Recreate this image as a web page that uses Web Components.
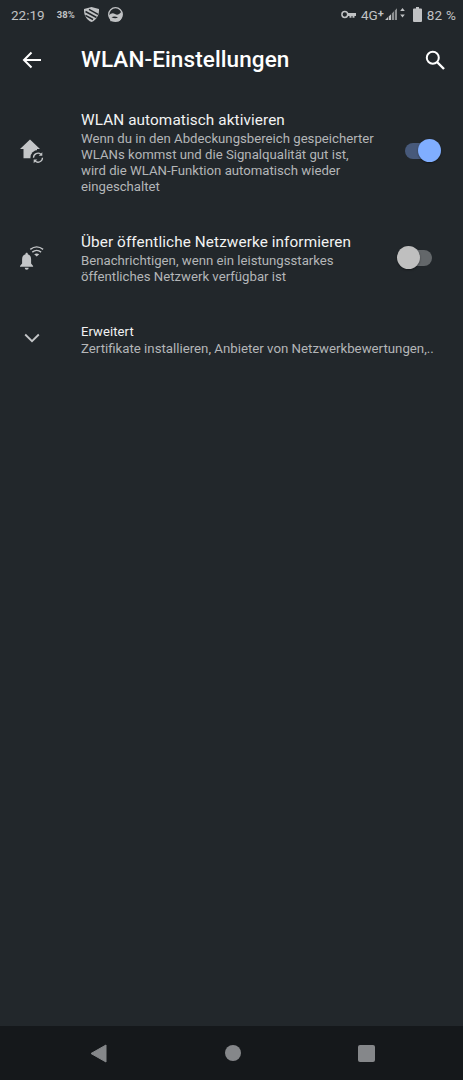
<!DOCTYPE html>
<html lang="de">
<head>
<meta charset="utf-8">
<title>WLAN-Einstellungen</title>
<style>
  html, body { margin: 0; height: 100%; background: #22272b; }
  body { font-family: Roboto, sans-serif; }
  #screen { display: flex; flex-direction: column; width: 463px; height: 1080px; overflow: hidden; }
  #list { flex: 1; display: block; }
</style>
</head>
<body>
<div id="screen">
  <status-bar></status-bar>
  <app-bar title="WLAN-Einstellungen"></app-bar>
  <div id="list">
    <setting-row title="WLAN automatisch aktivieren" icon="home" toggle="on" style="height:122px">
      Wenn du in den Abdeckungsbereich gespeicherter WLANs kommst und die Signalqualität gut ist, wird die WLAN-Funktion automatisch wieder eingeschaltet
    </setting-row>
    <setting-row title="Über öffentliche Netzwerke informieren" icon="bell" toggle="off" style="height:91px">
      Benachrichtigen, wenn ein leistungsstarkes öffentliches Netzwerk verfügbar ist
    </setting-row>
    <setting-row title="Erweitert" icon="chevron" style="height:70px" single>
      Zertifikate installieren, Anbieter von Netzwerkbewertungen,..
    </setting-row>
  </div>
  <nav-bar></nav-bar>
</div>

<script>
const ICONS = {
  home: `<svg width="28" height="28" viewBox="0 0 28 28">
    <path fill="#c4c6c8" d="M12 2.500 22 12h-3v9.300H5.500V12H2z"/>
    <circle cx="20" cy="20.700" r="7.600" fill="#22272b"/>
    <g fill="none" stroke="#c4c6c8" stroke-width="1.300">
      <path d="M15.500 20.700a4.500 4.500 0 0 1 7.400-3.400"/>
      <path d="M24.500 20.700a4.500 4.500 0 0 1-7.400 3.400"/>
    </g>
    <path fill="#c4c6c8" d="M24.300 15.200v3.600h-3.600zM15.700 26.200v-3.600h3.600z"/>
  </svg>`,
  bell: `<svg width="28" height="28" viewBox="0 0 28 28">
    <path fill="#c4c6c8" d="M8.700 8.700c.7 0 1.100.5 1.100 1.200v.3c2.300.7 3.300 2.600 3.300 5v4.300l2 2.400v.8H2v-.8l2.100-2.400v-4.300c0-2.400 1-4.300 3.400-5v-.3c0-.7.400-1.200 1.200-1.200z"/>
    <path fill="#c4c6c8" d="M6.700 23.800h4a2 2 0 0 1-4 0z"/>
    <g fill="none" stroke="#c4c6c8" stroke-width="1.400">
      <path d="M12.300 5.400Q18.700.4 25.100 5.400"/>
      <path d="M14.300 8.100Q18.700 4.700 23.100 8.100"/>
    </g>
    <path fill="#c4c6c8" d="M16.200 10.300Q18.700 8.600 21.200 10.300L18.700 12.500z"/>
  </svg>`,
  chevron: `<svg width="16" height="10" viewBox="0 0 16 10"><path fill="none" stroke="#c4c6c8" stroke-width="1.800" d="M1.200 1.500 8 8.200l6.800-6.700"/></svg>`
}

class StatusBar extends HTMLElement {
  constructor () {
    super()
    this.shadow = this.attachShadow({ mode: 'open' })
  }

  connectedCallback () {
    this.shadow.innerHTML = /* html */`
      <style>
        :host { display: flex; align-items: center; height: 29px; padding: 0 7px 0 11px; color: #c0c2c4; font-size: 13.5px; flex: none; }
        .left, .right { display: flex; align-items: center; }
        .right { margin-left: auto; }
        .pct { font-size: 9.500px; font-weight: 700; margin-left: 12px; letter-spacing: .1px; }
        svg { display: block; }
        .shield { margin-left: 9px; }
        .ball { margin-left: 9px; }
        .net { margin-left: 5px; font-size: 13.500px; }
        .net sup { font-size: 11px; line-height: 0; font-weight: 700; vertical-align: 3px; }
        .bars { margin-left: 1px; }
        .batt { margin-left: 8px; }
        .level { margin-left: 5px; letter-spacing: .2px; }
      </style>
      <div class="left">
        <span>22:19</span>
        <span class="pct">38%</span>
        <svg class="shield" width="15" height="15" viewBox="0 0 15 15">
          <path fill="#c0c2c4" d="M0 2 7.500 0 15 2c.2 5.800-2 10.500-7.500 13C2 12.500-.2 7.800 0 2z"/>
          <path fill="none" stroke="#22272b" stroke-width="1.500" d="M1.500 4.500l11 6M1.500 8.300l7.500 4.200M5 2.300l9 5"/>
        </svg>
        <svg class="ball" width="15" height="15" viewBox="0 0 15 15">
          <circle cx="7.500" cy="7.500" r="6.800" fill="none" stroke="#c0c2c4" stroke-width="1.300"/>
          <path fill="#c0c2c4" d="M.8 8.500C3 6 5 5.500 7 7s3.800 1 6.500-2.500c1.500 4.500.2 8-2.500 9.800H2.500z"/>
          <path fill="#22272b" d="M3.500 10.300c2-1 4-1 6.500.3-2 .9-4.500.7-6.500-.3z"/>
        </svg>
      </div>
      <div class="right">
        <svg width="15" height="9" viewBox="0 0 15 9">
          <circle cx="3.800" cy="4.500" r="2.900" fill="none" stroke="#c0c2c4" stroke-width="1.500"/>
          <path fill="#c0c2c4" d="M6.500 3H15v3h-1.500v1.800h-2V6h-1v1.800h-2V6H6.500z"/>
        </svg>
        <span class="net">4G<sup>+</sup></span>
        <svg class="bars" width="20" height="15" viewBox="0 0 20 15">
          <path fill="#c0c2c4" d="M0 13 3 10v3zM3.700 9.500 6 7.200V13H3.700z"/>
          <path fill="#8d9092" d="M6.800 6.400 9 4.200V13H6.800zM9.800 3.400 12 1.200V13H9.800z"/>
          <path fill="#c0c2c4" d="M17.500 1l2.300 3h-4.600zM17.500 10.500l-2.300-3h4.600z"/>
        </svg>
        <svg class="batt" width="9" height="15" viewBox="0 0 9 15">
          <path fill="#c0c2c4" d="M3 0h3v1.500h2a1 1 0 0 1 1 1V14a1 1 0 0 1-1 1H1a1 1 0 0 1-1-1V2.500a1 1 0 0 1 1-1h2z"/>
        </svg>
        <span class="level">82 %</span>
      </div>
    `
  }
}

class AppBar extends HTMLElement {
  constructor () {
    super()
    this.shadow = this.attachShadow({ mode: 'open' })
  }

  connectedCallback () {
    this.shadow.innerHTML = /* html */`
      <style>
        :host { display: flex; align-items: center; height: 61px; flex: none; padding: 0 18px 0 22px; box-sizing: border-box; color: #fff; }
        h1 { margin: 0 0 1px 40px; font: 500 22.500px Roboto, sans-serif; letter-spacing: .1px; flex: 1; }
        svg { display: block; }
      </style>
      <svg width="19" height="18" viewBox="0 0 19 18"><path fill="none" stroke="#fff" stroke-width="2" d="M19 9H2M9.500 1.500 2 9l7.500 7.500"/></svg>
      <h1>${this.getAttribute('title')}</h1>
      <svg width="20" height="20" viewBox="0 0 20 20"><circle cx="7.800" cy="7.800" r="6" fill="none" stroke="#fff" stroke-width="2"/><path stroke="#fff" stroke-width="2.400" d="M12 12l7 7"/></svg>
    `
  }
}

class SettingRow extends HTMLElement {
  constructor () {
    super()
    this.shadow = this.attachShadow({ mode: 'open' })
  }

  connectedCallback () {
    const toggle = this.getAttribute('toggle')
    this.shadow.innerHTML = /* html */`
      <style>
        :host { display: grid; grid-template-columns: 63px 1fr 64px; align-items: center; box-sizing: border-box; padding-left: 18px; }
        .icon { display: flex; justify-content: center; width: 28px; }
        .text { align-self: start; padding-top: 20px; min-width: 0; }
        .title { color: #f2f3f3; font-size: 15.300px; line-height: 20px; letter-spacing: .1px; }
        .sub { color: #b4b6b8; font-size: 13.200px; line-height: 16px; margin-top: 1px; width: 294.500px; }
        :host([single]) { grid-template-columns: 63px 1fr; }
        :host([single]) .text { padding-top: 20px; }
        :host([single]) .title { font-size: 13px; line-height: 18px; }
        :host([single]) .sub { width: auto; white-space: nowrap; margin-top: 0; font-size: 13.250px; }
      </style>
      <div class="icon">${ICONS[this.getAttribute('icon')]}</div>
      <div class="text">
        <div class="title">${this.getAttribute('title')}</div>
        <div class="sub"><slot></slot></div>
      </div>
      ${toggle ? `<toggle-switch ${toggle === 'on' ? 'checked' : ''}></toggle-switch>` : ''}
    `
  }
}

class ToggleSwitch extends HTMLElement {
  constructor () {
    super()
    this.shadow = this.attachShadow({ mode: 'open' })
  }

  connectedCallback () {
    this.shadow.innerHTML = /* html */`
      <style>
        :host { display: block; position: relative; width: 33px; height: 24px; }
        .track { position: absolute; left: 0; top: 4px; width: 100%; height: 16px; border-radius: 8px; background: #63676a; }
        .thumb { position: absolute; left: -2px; top: 0; width: 23px; height: 23px; border-radius: 50%; background: #bfbfbf; box-shadow: 0 1px 2px rgba(0,0,0,.4); }
        :host([checked]) .track { background: #47597a; left: 6px; width: 27px; }
        :host([checked]) .thumb { left: 19px; background: #80aeff; }
      </style>
      <div class="track"></div>
      <div class="thumb"></div>
    `
  }
}

class NavBar extends HTMLElement {
  constructor () {
    super()
    this.shadow = this.attachShadow({ mode: 'open' })
  }

  connectedCallback () {
    this.shadow.innerHTML = /* html */`
      <style>
        :host { display: flex; align-items: center; justify-content: space-between; flex: none; height: 54px; box-sizing: border-box; padding: 0 88px 0 90px; background: #15181b; }
        svg { display: block; }
      </style>
      <svg width="17" height="19" viewBox="0 0 17 19"><path fill="#85878a" stroke="#85878a" stroke-linejoin="round" d="M16 1v17L1 9.500z"/></svg>
      <svg width="16" height="16" viewBox="0 0 16 16"><circle cx="8" cy="8" r="8" fill="#85878a"/></svg>
      <svg width="17" height="17" viewBox="0 0 17 17"><rect width="17" height="17" rx="2" fill="#85878a"/></svg>
    `
  }
}

customElements.define('status-bar', StatusBar)
customElements.define('app-bar', AppBar)
customElements.define('setting-row', SettingRow)
customElements.define('toggle-switch', ToggleSwitch)
customElements.define('nav-bar', NavBar)
</script>
</body>
</html>
